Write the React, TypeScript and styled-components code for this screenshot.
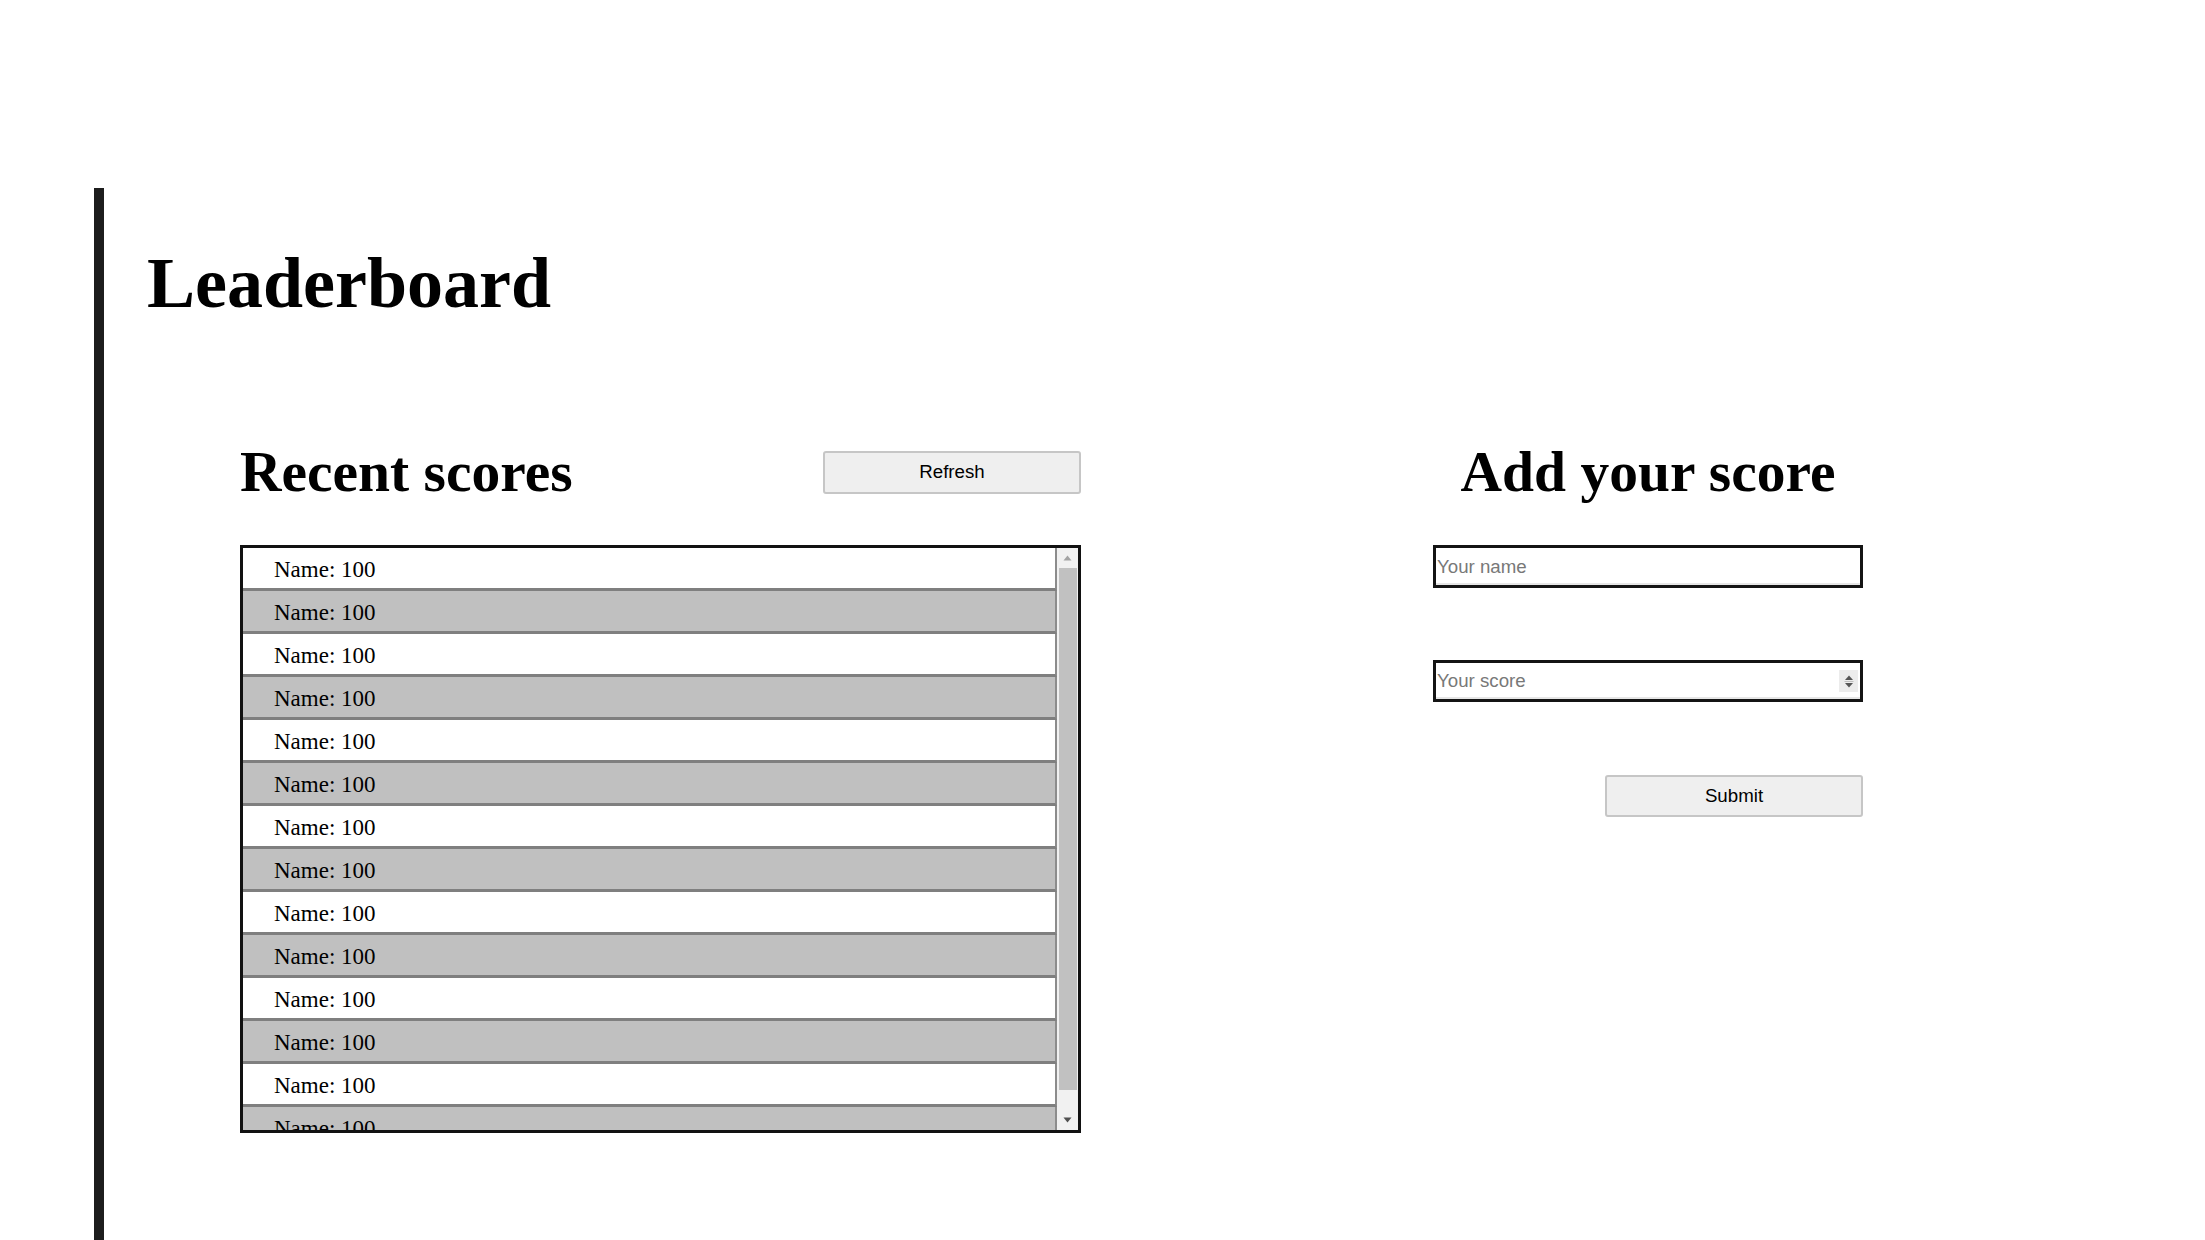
import React from "react";
import styled, { createGlobalStyle } from "styled-components";

const Global = createGlobalStyle`
  html, body { margin: 0; padding: 0; background: #ffffff; }
  body { font-family: "Liberation Serif", "Times New Roman", serif; color: #000; }
  * { box-sizing: border-box; }
`;

const Page = styled.div`
  padding-top: 188px;
  padding-left: 94px;
`;

const Panel = styled.main`
  border-left: 10px solid #1d1d1d;
  min-height: 1052px;
  padding: 60px 0 0 43px;
`;

const Title = styled.h1`
  margin: 0;
  font-family: "Liberation Serif", "Times New Roman", serif;
  font-weight: 700;
  font-size: 72px;
  line-height: 71px;
`;

const Columns = styled.div`
  display: flex;
  align-items: flex-start;
  gap: 352px;
  margin: 131px 0 0 93px;
`;

const LeftColumn = styled.section`
  width: 841px;
  display: flex;
  flex-direction: column;
`;

const RightColumn = styled.section`
  width: 430px;
  display: flex;
  flex-direction: column;
`;

const HeaderRow = styled.div<{ $center?: boolean }>`
  height: 44px;
  display: flex;
  align-items: center;
  justify-content: ${(p) => (p.$center ? "center" : "space-between")};
`;

const Heading = styled.h2`
  margin: 0;
  font-family: "Liberation Serif", "Times New Roman", serif;
  font-weight: 700;
  font-size: 57.5px;
  line-height: 44px;
  white-space: nowrap;
`;

const Button = styled.button<{ $top?: number }>`
  width: 258px;
  height: 43px;
  margin-top: ${(p) => p.$top ?? 0}px;
  background: #efefef;
  border: 2px solid #c6c6c6;
  border-radius: 3px;
  font-family: "Liberation Sans", Arial, sans-serif;
  font-size: 18.7px;
  color: #000;
  padding: 0;
  cursor: pointer;
`;

const SubmitButton = styled(Button)`
  align-self: flex-end;
  height: 42px;
`;

const ListBox = styled.div`
  margin-top: 51px;
  height: 588px;
  border: 3px solid #111;
  display: flex;
  overflow: hidden;
`;

const Rows = styled.ul`
  flex: 1;
  margin: 0;
  padding: 0;
  list-style: none;
  overflow: hidden;
`;

const Row = styled.li<{ $alt: boolean }>`
  height: 43px;
  padding-left: 31px;
  background: ${(p) => (p.$alt ? "#c0c0c0" : "#ffffff")};
  border-bottom: 3px solid #7f7f7f;
  border-right: 2px solid #8c8c8c;
  font-family: "Liberation Serif", "Times New Roman", serif;
  font-size: 23px;
  line-height: 44px;
  white-space: nowrap;
`;

const ScrollBar = styled.div`
  width: 21px;
  display: flex;
  flex-direction: column;
  background: #f1f1f1;
`;

const ScrollButton = styled.div`
  height: 20px;
  display: flex;
  align-items: center;
  justify-content: center;
`;

const Thumb = styled.div`
  height: 522px;
  margin: 0 1px 0 2px;
  background: #c1c1c1;
`;

const Track = styled.div`
  flex: 1;
`;

const Field = styled.input<{ $top: number; $h?: number }>`
  width: 430px;
  height: ${(p) => p.$h ?? 43}px;
  margin-top: ${(p) => p.$top}px;
  border: 3px solid #141414;
  box-shadow: inset 0 -2px 0 #e6e6e6;
  padding: 0 0 0 1px;
  font-family: "Liberation Sans", Arial, sans-serif;
  font-size: 18.7px;
  color: #000;
  background: #fff;
  outline: none;
  &::placeholder { color: #787878; }
  &::-webkit-inner-spin-button,
  &::-webkit-outer-spin-button { -webkit-appearance: none; margin: 0; }
  -moz-appearance: textfield;
`;

const FieldWrap = styled.div<{ $top: number }>`
  position: relative;
  margin-top: ${(p) => p.$top}px;
  width: 430px;
`;

const Spinner = styled.div`
  position: absolute;
  right: 5px;
  top: 10px;
  width: 19px;
  height: 22px;
  background: #ececec;
  display: flex;
  align-items: center;
  justify-content: center;
`;

const Arrow = ({ up, color }: { up: boolean; color: string }) => (
  <svg width="9" height="6" viewBox="0 0 9 6">
    <polygon points={up ? "0.5,5.5 4.5,0.5 8.5,5.5" : "0.5,0.5 4.5,5.5 8.5,0.5"} fill={color} />
  </svg>
);

const rows = Array.from({ length: 14 }, (_, i) => i);

export default function App() {
  return (
    <>
      <Global />
      <Page>
        <Panel>
          <Title>Leaderboard</Title>
          <Columns>
            <LeftColumn>
              <HeaderRow>
                <Heading>Recent scores</Heading>
                <Button type="button">Refresh</Button>
              </HeaderRow>
              <ListBox>
                <Rows>
                  {rows.map((i) => (
                    <Row key={i} $alt={i % 2 === 1}>
                      Name: 100
                    </Row>
                  ))}
                </Rows>
                <ScrollBar>
                  <ScrollButton>
                    <Arrow up color="#a3a3a3" />
                  </ScrollButton>
                  <Thumb />
                  <Track />
                  <ScrollButton>
                    <Arrow up={false} color="#505050" />
                  </ScrollButton>
                </ScrollBar>
              </ListBox>
            </LeftColumn>
            <RightColumn>
              <HeaderRow $center>
                <Heading>Add your score</Heading>
              </HeaderRow>
              <Field $top={51} type="text" placeholder="Your name" />
              <FieldWrap $top={72}>
                <Field $top={0} $h={42} type="number" placeholder="Your score" />
                <Spinner>
                  <svg width="12" height="17" viewBox="0 0 12 17">
                    <polygon points="2,7 6,2.5 10,7" fill="#555555" />
                    <line x1="1.5" y1="8.5" x2="10.5" y2="8.5" stroke="#bdbdbd" strokeWidth="1" />
                    <polygon points="2,10 6,14.5 10,10" fill="#555555" />
                  </svg>
                </Spinner>
              </FieldWrap>
              <SubmitButton type="button" $top={73}>
                Submit
              </SubmitButton>
            </RightColumn>
          </Columns>
        </Panel>
      </Page>
    </>
  );
}
